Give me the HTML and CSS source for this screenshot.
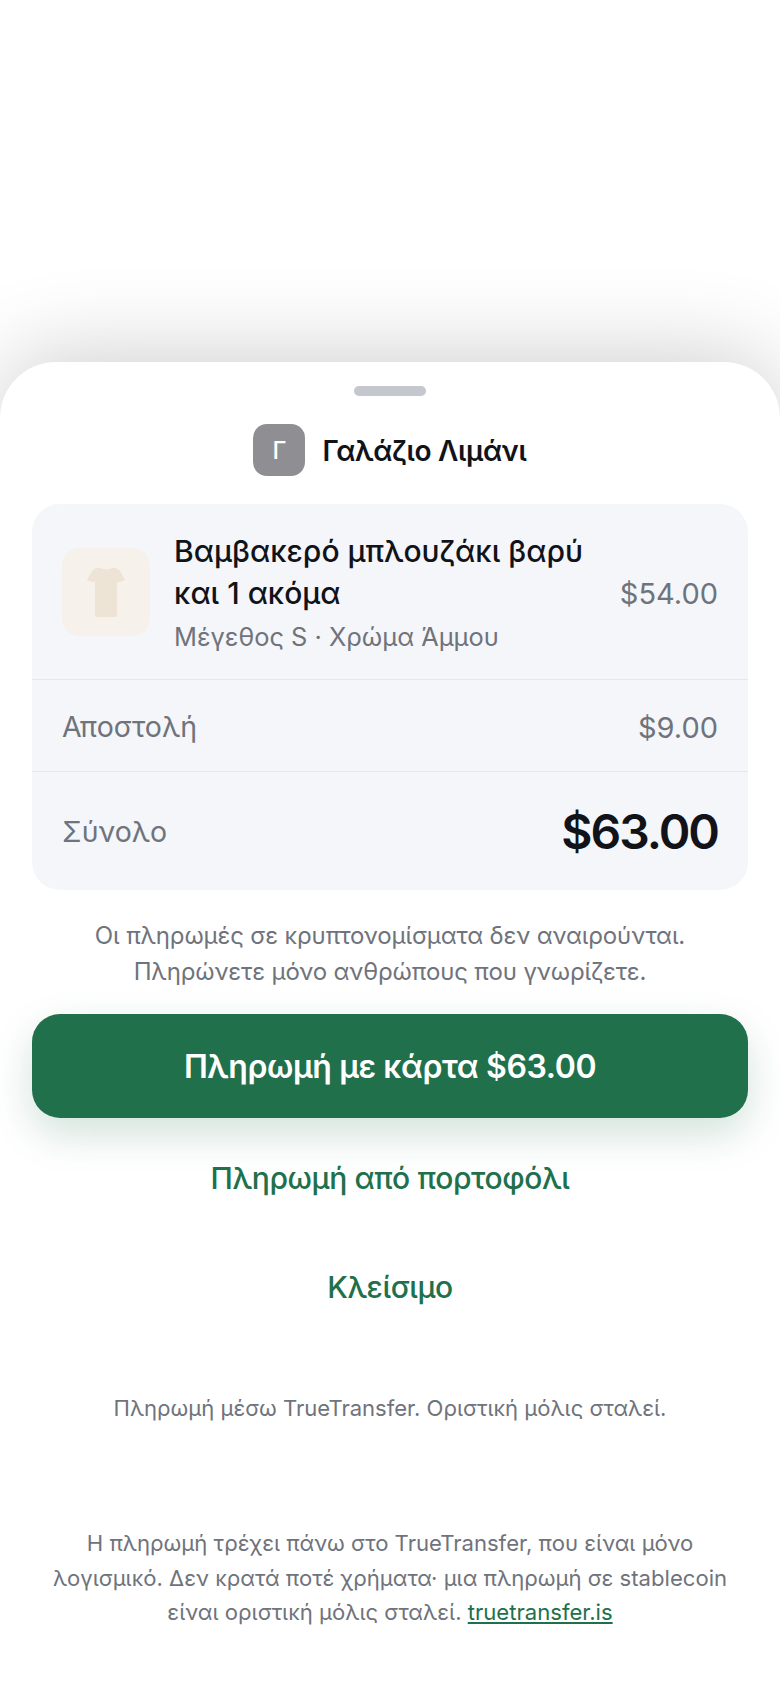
FILE: index.html
```html
<!DOCTYPE html>
<html lang="el">
<head>
<meta charset="utf-8">
<title>Πληρωμή</title>
<link rel="stylesheet" href="styles.css">
</head>
<body>
<main class="sheet">
  <div class="handle"></div>
  <header class="merchant">
    <div class="avatar">Γ</div>
    <div class="merchant-name">Γαλάζιο Λιμάνι</div>
  </header>
  <section class="card">
    <div class="row item">
      <div class="thumb">
        <svg width="38" height="50" viewBox="0 0 38 50"><path class="shirt" d="M11.500 0.500 Q19 4.500 26.500 0.500 L30 1.500 Q32 2.500 33.500 5 L38 13 L31 15.500 L30 13.500 L30 48.500 Q30 50 28.500 50 L9.500 50 Q8 50 8 48.500 L8 13.500 L7 15.500 L0 13 L4.500 5 Q6 2.500 8 1.500 Z"/></svg>
      </div>
      <div class="item-text">
        <div class="item-title">Βαμβακερό μπλουζάκι βαρύ και 1 ακόμα</div>
        <div class="item-sub">Μέγεθος S · Χρώμα Άμμου</div>
      </div>
      <div class="price">$54.00</div>
    </div>
    <div class="row ship">
      <div class="label ship-label">Αποστολή</div>
      <div class="price">$9.00</div>
    </div>
    <div class="row total">
      <div class="label">Σύνολο</div>
      <div class="total-amount">$63.00</div>
    </div>
  </section>
  <p class="warning">Οι πληρωμές σε κρυπτονομίσματα δεν αναιρούνται.<br>Πληρώνετε μόνο ανθρώπους που γνωρίζετε.</p>
  <button class="primary">Πληρωμή με κάρτα $63.00</button>
  <button class="link wallet">Πληρωμή από πορτοφόλι</button>
  <button class="link close">Κλείσιμο</button>
  <p class="via">Πληρωμή μέσω TrueTransfer. Οριστική μόλις σταλεί.</p>
  <p class="legal">Η πληρωμή τρέχει πάνω στο TrueTransfer, που είναι μόνο λογισμικό. Δεν κρατά ποτέ χρήματα· μια πληρωμή σε stablecoin είναι οριστική μόλις σταλεί. <a href="#">truetransfer.is</a></p>
</main>
</body>
</html>
```

FILE: styles.css
```css
* { box-sizing: border-box; }
html, body { margin: 0; height: 100%; background: #fff; }
body {
  padding-top: 362px;
  overflow: hidden;
  font-family: Inter, "Noto Sans", sans-serif;
  color: #111318;
}
.sheet {
  height: 1326px;
  padding: 24px 32px 0;
  background: #fff;
  border-radius: 56px 56px 0 0;
  box-shadow: 0 -8px 88px rgba(0, 0, 0, 0.19);
}
.handle {
  width: 72px;
  height: 10px;
  margin: 0 auto;
  border-radius: 5px;
  background: #c5c7ce;
}
.merchant {
  display: flex;
  justify-content: center;
  align-items: center;
  gap: 17px;
  margin-top: 28px;
}
.avatar {
  display: flex;
  justify-content: center;
  align-items: center;
  width: 52px;
  height: 52px;
  border-radius: 14px;
  background: #8e8e93;
  color: #fff;
  font-size: 24px;
  font-weight: 500;
}
.merchant-name {
  padding-top: 1px;
  font-size: 28px;
  font-weight: 600;
  letter-spacing: -0.3px;
}
.card {
  margin-top: 28px;
  border-radius: 28px;
  background: #f4f6fa;
}
.row {
  display: flex;
  justify-content: space-between;
  align-items: center;
  padding: 0 30px;
  border-bottom: 1px solid #e6e7ec;
}
.item { height: 176px; }
.ship { height: 92px; }
.total { height: 118px; border-bottom: 0; }
.thumb {
  display: flex;
  justify-content: center;
  align-items: center;
  flex: none;
  width: 88px;
  height: 88px;
  border-radius: 18px;
  background: #f6f1ea;
}
.shirt { fill: #ede4d6; }
.item-text {
  flex: 1;
  min-width: 0;
  padding: 0 24px;
}
.item-title {
  font-size: 30px;
  font-weight: 500;
  line-height: 42px;
}
.item-sub {
  margin-top: 6px;
  font-size: 25.400px;
  line-height: 34px;
  color: #6f737c;
}
.price {
  padding-top: 3px;
  font-size: 29px;
  color: #6f737c;
}
.label {
  font-size: 28.500px;
  color: #6f737c;
}
.ship-label { padding-top: 2px; }
.total-amount {
  font-size: 48px;
  font-weight: 600;
  letter-spacing: -2px;
}
.warning {
  margin: 28px 0 0;
  text-align: center;
  font-size: 24px;
  letter-spacing: -0.14px;
  line-height: 36px;
  color: #6f737c;
}
button {
  display: block;
  width: 100%;
  border: 0;
  font-family: inherit;
}
.primary {
  height: 104px;
  margin-top: 24px;
  border-radius: 28px;
  background: #20704c;
  box-shadow: 0 16px 40px rgba(32, 112, 76, 0.2);
  color: #fff;
  font-size: 32px;
  font-weight: 600;
  letter-spacing: -0.4px;
}
.link {
  height: 108px;
  background: none;
  color: #20704c;
  font-size: 30px;
  font-weight: 500;
  letter-spacing: -0.4px;
}
.wallet { margin-top: 6px; }
.close { margin-top: 1px; }
.via {
  margin: 51px 0 0;
  text-align: center;
  font-size: 22.050px;
  line-height: 32px;
  color: #6f737c;
}
.legal {
  margin: 102px 0 0;
  text-align: center;
  font-size: 22.100px;
  line-height: 34.500px;
  color: #6f737c;
}
.legal a { color: #20704c; }
```
